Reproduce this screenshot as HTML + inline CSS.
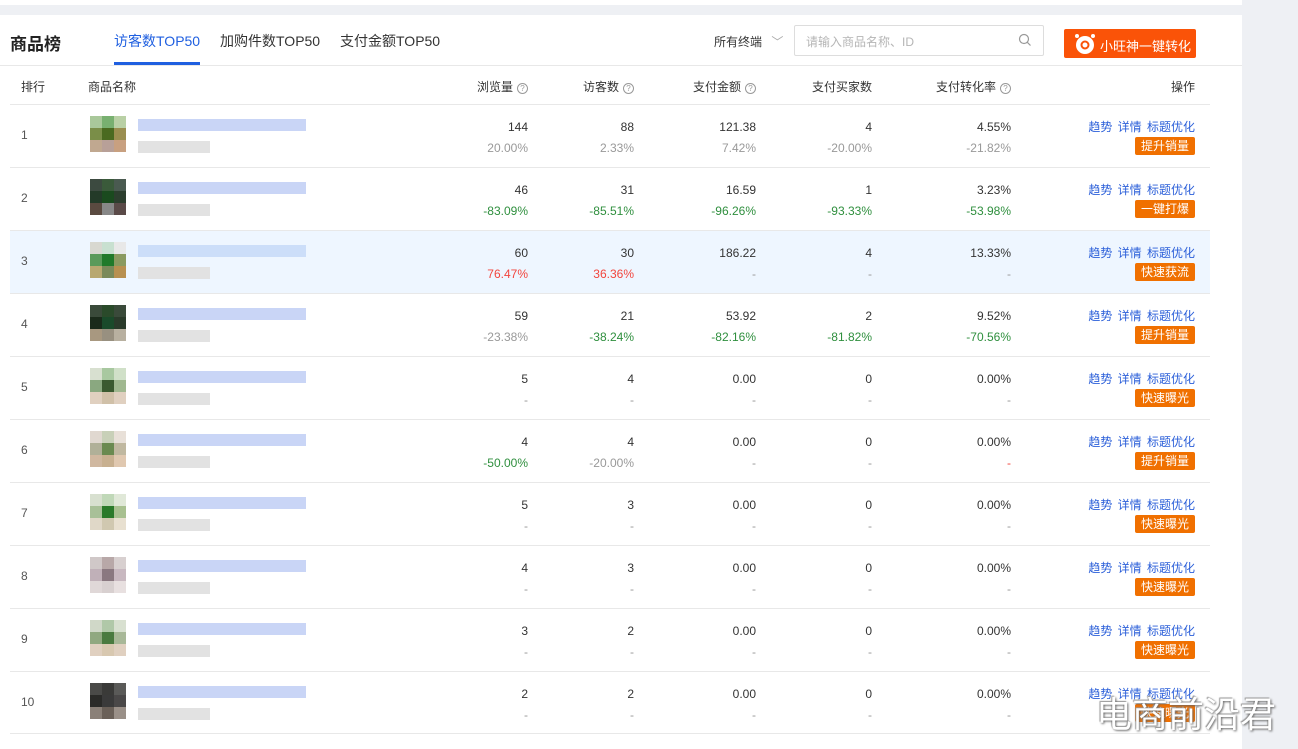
<!DOCTYPE html>
<html><head><meta charset="utf-8"><style>
*{margin:0;padding:0;box-sizing:border-box}
body{width:1298px;height:749px;background:#eef0f4;font-family:"Liberation Sans","Noto Sans CJK SC",sans-serif;color:#333;position:relative;overflow:hidden;font-size:12px}
.topcard{position:absolute;left:0;top:0;width:1242px;height:5px;background:#fff}
.card{position:absolute;left:0;top:15px;width:1242px;height:734px;background:#fff}
.a{position:absolute;white-space:nowrap}
.hdr{position:absolute;left:0;top:65px;width:1242px;height:1px;background:#e8e8e8}
.th{position:absolute;top:78px;font-size:12px;color:#333}
.q{display:inline-block;width:11px;height:11px;border:1px solid #999;border-radius:50%;font-size:8px;line-height:9px;text-align:center;color:#999;margin-left:4px;vertical-align:0}
.row{position:absolute;left:10px;width:1200px;height:63px;border-top:1px solid #e8e8e8}
.row .rk{position:absolute;left:11px;top:23px;font-size:12px;color:#555}
.v{position:absolute;text-align:right;font-size:12px;color:#333}
.v1{top:15px}.v2{top:36px;color:#999}
.g{color:#2f8f3e!important}.r{color:#f2453d!important}
.thumb{position:absolute;left:80px;top:11px;width:36px;height:36px;display:grid;grid-template-columns:repeat(3,12px)}
.thumb i{display:block;width:12px;height:12px}
.b1{position:absolute;left:128px;top:14px;width:168px;height:12px;background:#c3d0f5;opacity:.9}
.b2{position:absolute;left:128px;top:36px;width:72px;height:12px;background:#e2e2e2}
.ops{position:absolute;right:15px;top:13px;font-size:12px;color:#2b5fd9;word-spacing:2px}
.btn{position:absolute;right:15px;top:32px;width:60px;height:18px;background:#f07000;color:#fff;font-size:12px;line-height:18px;text-align:center;border-radius:2px}
</style></head><body>
<div class="topcard"></div>
<div class="card"></div>
<div class="a" style="left:10px;top:30px;font-size:17px;font-weight:bold;color:#222">商品榜</div>
<div class="a" style="left:114px;top:31px;font-size:14px;color:#1f5fe0">访客数TOP50</div>
<div class="a" style="left:114px;top:62px;width:86px;height:3px;background:#1f5fe0"></div>
<div class="a" style="left:220px;top:31px;font-size:14px;color:#333">加购件数TOP50</div>
<div class="a" style="left:340px;top:31px;font-size:14px;color:#333">支付金额TOP50</div>
<div class="a" style="left:714px;top:33px;font-size:12px;color:#333">所有终端 <span style="color:#aaa;margin-left:6px">﹀</span></div>
<div class="a" style="left:794px;top:25px;width:250px;height:31px;border:1px solid #ddd;border-radius:2px"></div>
<div class="a" style="left:806px;top:33px;font-size:12px;color:#b5b5b5">请输入商品名称、ID</div>
<svg class="a" style="left:1018px;top:33px" width="14" height="14" viewBox="0 0 14 14"><circle cx="6" cy="6" r="4.5" fill="none" stroke="#999" stroke-width="1.2"/><path d="M9.3 9.3L12.5 12.5" stroke="#999" stroke-width="1.2"/></svg>
<div class="a" style="left:1064px;top:29px;width:132px;height:29px;background:#fa5308;border-radius:2px"></div>
<svg class="a" style="left:1072px;top:31px" width="26" height="26" viewBox="0 0 26 26"><circle cx="13" cy="14" r="9" fill="#fff"/><circle cx="13" cy="14" r="3.5" fill="none" stroke="#fa5308" stroke-width="2"/><circle cx="5" cy="5" r="2" fill="#fff"/><circle cx="21" cy="5" r="2" fill="#fff"/></svg>
<div class="a" style="left:1100px;top:36px;font-size:13px;color:#fff">小旺神一键转化</div>
<div class="hdr"></div>
<div class="th" style="left:21px">排行</div>
<div class="th" style="left:88px">商品名称</div>
<div class="th" style="right:770px">浏览量<span class="q">?</span></div>
<div class="th" style="right:664px">访客数<span class="q">?</span></div>
<div class="th" style="right:542px">支付金额<span class="q">?</span></div>
<div class="th" style="right:426px">支付买家数</div>
<div class="th" style="right:287px">支付转化率<span class="q">?</span></div>
<div class="th" style="right:103px">操作</div>

<div class="row" style="top:104px"><div class="rk">1</div>
<div class="thumb"><i style="background:#a9c89a"></i><i style="background:#78b070"></i><i style="background:#b9d0a5"></i><i style="background:#7a8e48"></i><i style="background:#4a6a20"></i><i style="background:#9a8e50"></i><i style="background:#c0a890"></i><i style="background:#b8a098"></i><i style="background:#c8a080"></i></div><div class="b1"></div><div class="b2"></div>
<div class="v v1" style="right:682px">144</div><div class="v v2" style="right:682px">20.00%</div>
<div class="v v1" style="right:576px">88</div><div class="v v2" style="right:576px">2.33%</div>
<div class="v v1" style="right:454px">121.38</div><div class="v v2" style="right:454px">7.42%</div>
<div class="v v1" style="right:338px">4</div><div class="v v2" style="right:338px">-20.00%</div>
<div class="v v1" style="right:199px">4.55%</div><div class="v v2" style="right:199px">-21.82%</div>
<div class="ops">趋势 详情 标题优化</div><div class="btn">提升销量</div></div>

<div class="row" style="top:167px"><div class="rk">2</div>
<div class="thumb"><i style="background:#3c4a40"></i><i style="background:#3a5a3a"></i><i style="background:#4a5a50"></i><i style="background:#233a28"></i><i style="background:#1a4a1e"></i><i style="background:#2c3e2e"></i><i style="background:#5a4a40"></i><i style="background:#888"></i><i style="background:#5a4a48"></i></div><div class="b1"></div><div class="b2"></div>
<div class="v v1" style="right:682px">46</div><div class="v v2 g" style="right:682px">-83.09%</div>
<div class="v v1" style="right:576px">31</div><div class="v v2 g" style="right:576px">-85.51%</div>
<div class="v v1" style="right:454px">16.59</div><div class="v v2 g" style="right:454px">-96.26%</div>
<div class="v v1" style="right:338px">1</div><div class="v v2 g" style="right:338px">-93.33%</div>
<div class="v v1" style="right:199px">3.23%</div><div class="v v2 g" style="right:199px">-53.98%</div>
<div class="ops">趋势 详情 标题优化</div><div class="btn">一键打爆</div></div>

<div class="row" style="top:230px;background:#eef6ff"><div class="rk">3</div>
<div class="thumb"><i style="background:#d8d8d0"></i><i style="background:#c8e0d0"></i><i style="background:#e8e8e8"></i><i style="background:#5a9a5a"></i><i style="background:#207a2a"></i><i style="background:#8a9a60"></i><i style="background:#b8a870"></i><i style="background:#7a8a5a"></i><i style="background:#b89050"></i></div><div class="b1" style="background:#c8dcf8"></div><div class="b2"></div>
<div class="v v1" style="right:682px">60</div><div class="v v2 r" style="right:682px">76.47%</div>
<div class="v v1" style="right:576px">30</div><div class="v v2 r" style="right:576px">36.36%</div>
<div class="v v1" style="right:454px">186.22</div><div class="v v2" style="right:454px">-</div>
<div class="v v1" style="right:338px">4</div><div class="v v2" style="right:338px">-</div>
<div class="v v1" style="right:199px">13.33%</div><div class="v v2" style="right:199px">-</div>
<div class="ops">趋势 详情 标题优化</div><div class="btn">快速获流</div></div>

<div class="row" style="top:293px"><div class="rk">4</div>
<div class="thumb"><i style="background:#3a4a3a"></i><i style="background:#2a4a2a"></i><i style="background:#3a4a3a"></i><i style="background:#1a2a1a"></i><i style="background:#1a4a2a"></i><i style="background:#2a3a2a"></i><i style="background:#a89880"></i><i style="background:#989080"></i><i style="background:#b8b0a0"></i></div><div class="b1"></div><div class="b2"></div>
<div class="v v1" style="right:682px">59</div><div class="v v2" style="right:682px">-23.38%</div>
<div class="v v1" style="right:576px">21</div><div class="v v2 g" style="right:576px">-38.24%</div>
<div class="v v1" style="right:454px">53.92</div><div class="v v2 g" style="right:454px">-82.16%</div>
<div class="v v1" style="right:338px">2</div><div class="v v2 g" style="right:338px">-81.82%</div>
<div class="v v1" style="right:199px">9.52%</div><div class="v v2 g" style="right:199px">-70.56%</div>
<div class="ops">趋势 详情 标题优化</div><div class="btn">提升销量</div></div>

<div class="row" style="top:356px"><div class="rk">5</div>
<div class="thumb"><i style="background:#d8e0d0"></i><i style="background:#a8c8a0"></i><i style="background:#d0e0c8"></i><i style="background:#8aa880"></i><i style="background:#3a5a30"></i><i style="background:#a0b890"></i><i style="background:#e0d0c0"></i><i style="background:#d0c0a8"></i><i style="background:#e0d0c0"></i></div><div class="b1"></div><div class="b2"></div>
<div class="v v1" style="right:682px">5</div><div class="v v2" style="right:682px">-</div>
<div class="v v1" style="right:576px">4</div><div class="v v2" style="right:576px">-</div>
<div class="v v1" style="right:454px">0.00</div><div class="v v2" style="right:454px">-</div>
<div class="v v1" style="right:338px">0</div><div class="v v2" style="right:338px">-</div>
<div class="v v1" style="right:199px">0.00%</div><div class="v v2" style="right:199px">-</div>
<div class="ops">趋势 详情 标题优化</div><div class="btn">快速曝光</div></div>

<div class="row" style="top:419px"><div class="rk">6</div>
<div class="thumb"><i style="background:#e0d8d0"></i><i style="background:#c8d0b8"></i><i style="background:#e8e0d8"></i><i style="background:#b0b098"></i><i style="background:#6a8a50"></i><i style="background:#c0b8a0"></i><i style="background:#d0b8a0"></i><i style="background:#c8b090"></i><i style="background:#e0c8b0"></i></div><div class="b1"></div><div class="b2"></div>
<div class="v v1" style="right:682px">4</div><div class="v v2 g" style="right:682px">-50.00%</div>
<div class="v v1" style="right:576px">4</div><div class="v v2" style="right:576px">-20.00%</div>
<div class="v v1" style="right:454px">0.00</div><div class="v v2" style="right:454px">-</div>
<div class="v v1" style="right:338px">0</div><div class="v v2" style="right:338px">-</div>
<div class="v v1" style="right:199px">0.00%</div><div class="v v2 r" style="right:199px">-</div>
<div class="ops">趋势 详情 标题优化</div><div class="btn">提升销量</div></div>

<div class="row" style="top:482px"><div class="rk">7</div>
<div class="thumb"><i style="background:#d8e0d0"></i><i style="background:#c0d8b8"></i><i style="background:#e0e8d8"></i><i style="background:#a8c098"></i><i style="background:#2a7a2a"></i><i style="background:#a8c090"></i><i style="background:#e0d8c8"></i><i style="background:#d0c8b0"></i><i style="background:#e8e0d0"></i></div><div class="b1"></div><div class="b2"></div>
<div class="v v1" style="right:682px">5</div><div class="v v2" style="right:682px">-</div>
<div class="v v1" style="right:576px">3</div><div class="v v2" style="right:576px">-</div>
<div class="v v1" style="right:454px">0.00</div><div class="v v2" style="right:454px">-</div>
<div class="v v1" style="right:338px">0</div><div class="v v2" style="right:338px">-</div>
<div class="v v1" style="right:199px">0.00%</div><div class="v v2" style="right:199px">-</div>
<div class="ops">趋势 详情 标题优化</div><div class="btn">快速曝光</div></div>

<div class="row" style="top:545px"><div class="rk">8</div>
<div class="thumb"><i style="background:#d0c8c8"></i><i style="background:#b8a8a8"></i><i style="background:#d8d0d0"></i><i style="background:#c0b0b8"></i><i style="background:#8a7880"></i><i style="background:#c8b8c0"></i><i style="background:#e0d8d8"></i><i style="background:#d8d0d0"></i><i style="background:#e8e0e0"></i></div><div class="b1"></div><div class="b2"></div>
<div class="v v1" style="right:682px">4</div><div class="v v2" style="right:682px">-</div>
<div class="v v1" style="right:576px">3</div><div class="v v2" style="right:576px">-</div>
<div class="v v1" style="right:454px">0.00</div><div class="v v2" style="right:454px">-</div>
<div class="v v1" style="right:338px">0</div><div class="v v2" style="right:338px">-</div>
<div class="v v1" style="right:199px">0.00%</div><div class="v v2" style="right:199px">-</div>
<div class="ops">趋势 详情 标题优化</div><div class="btn">快速曝光</div></div>

<div class="row" style="top:608px"><div class="rk">9</div>
<div class="thumb"><i style="background:#d0d8c8"></i><i style="background:#b0c8a8"></i><i style="background:#d8e0d0"></i><i style="background:#90a880"></i><i style="background:#4a7a40"></i><i style="background:#a8b898"></i><i style="background:#e0d0c0"></i><i style="background:#d8c8b0"></i><i style="background:#e0d0c0"></i></div><div class="b1"></div><div class="b2"></div>
<div class="v v1" style="right:682px">3</div><div class="v v2" style="right:682px">-</div>
<div class="v v1" style="right:576px">2</div><div class="v v2" style="right:576px">-</div>
<div class="v v1" style="right:454px">0.00</div><div class="v v2" style="right:454px">-</div>
<div class="v v1" style="right:338px">0</div><div class="v v2" style="right:338px">-</div>
<div class="v v1" style="right:199px">0.00%</div><div class="v v2" style="right:199px">-</div>
<div class="ops">趋势 详情 标题优化</div><div class="btn">快速曝光</div></div>

<div class="row" style="top:671px;border-bottom:1px solid #e8e8e8"><div class="rk">10</div>
<div class="thumb"><i style="background:#4a4a48"></i><i style="background:#3a3a38"></i><i style="background:#5a5a58"></i><i style="background:#2a2a28"></i><i style="background:#3a3a3a"></i><i style="background:#4a4848"></i><i style="background:#8a8078"></i><i style="background:#6a6058"></i><i style="background:#9a9088"></i></div><div class="b1"></div><div class="b2"></div>
<div class="v v1" style="right:682px">2</div><div class="v v2" style="right:682px">-</div>
<div class="v v1" style="right:576px">2</div><div class="v v2" style="right:576px">-</div>
<div class="v v1" style="right:454px">0.00</div><div class="v v2" style="right:454px">-</div>
<div class="v v1" style="right:338px">0</div><div class="v v2" style="right:338px">-</div>
<div class="v v1" style="right:199px">0.00%</div><div class="v v2" style="right:199px">-</div>
<div class="ops">趋势 详情 标题优化</div><div class="btn">快速曝光</div></div>

<div class="a" style="left:1096px;top:686px;font-size:36px;color:#fff;text-shadow:1px 1px 2px #666,-1px -1px 1px #999;letter-spacing:0px">电商前沿君</div>
</body></html>
